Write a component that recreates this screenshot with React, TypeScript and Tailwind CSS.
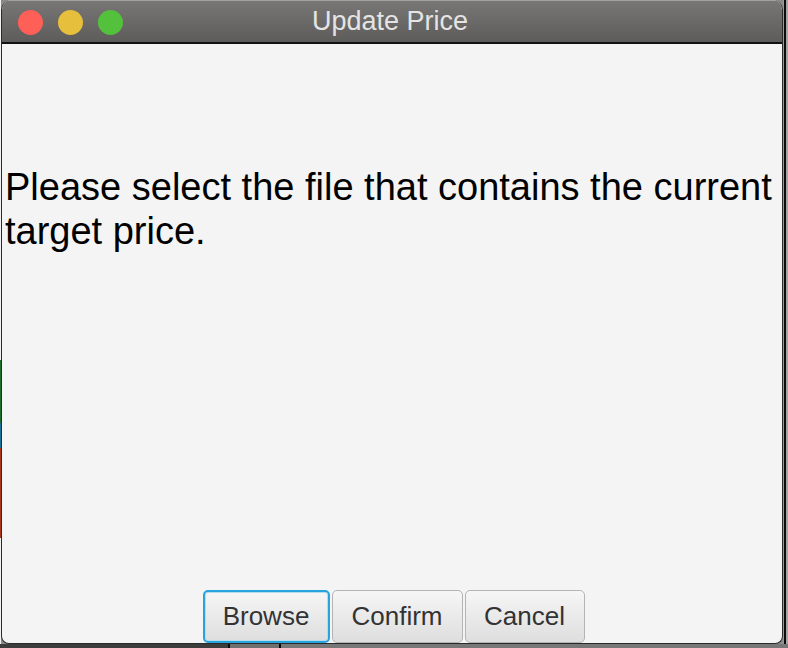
import React from "react";

const font = { fontFamily: '"Liberation Sans", Arial, sans-serif' };

/* ── Buttons ── */
const buttons = [
  { label: "Browse", w: "w-[127px]", focused: true },
  { label: "Confirm", w: "w-[131px]", focused: false },
  { label: "Cancel", w: "w-[120px]", focused: false },
];

export default function App() {
  return (
    <div className="w-[788px] h-[648px] bg-[#8a8a8a] flex flex-col overflow-hidden" style={font}>
      <div className="flex h-[644px]">
        {/* backdrop sliver on the left */}
        <div className="w-[1px] flex flex-col bg-[#f2f2f2]">
          <div className="h-[360px]" />
          <div className="h-[63px] bg-[#1f6b2c]" />
          <div className="h-[25px] bg-[#1c6f95]" />
          <div className="h-[90px] bg-[#a8391f]" />
        </div>

        {/* ── Window ── */}
        <div className="w-[782px] flex flex-col bg-[#f4f4f4] border-l border-r border-b border-[#2a2a2a] rounded-t-[10px] rounded-b-[8px] overflow-hidden">
          {/* Title bar */}
          <div className="relative h-[44px] shrink-0 flex items-center justify-center bg-gradient-to-b from-[#797775] to-[#5d5c5a] border-t border-[#a3a1a0] border-b-2 border-b-[#111]">
            <div className="absolute left-[16px] top-[9px] flex gap-[15px]">
              <span className="w-[25px] h-[25px] rounded-full bg-[#fe5f57]" />
              <span className="w-[25px] h-[25px] rounded-full bg-[#e6bf3d]" />
              <span className="w-[25px] h-[25px] rounded-full bg-[#53c13c]" />
            </div>
            <span className="text-[27px] text-[#e4e4e4] leading-none pr-[4px]">Update Price</span>
          </div>

          {/* Body */}
          <div className="flex-1 flex flex-col">
            <p className="pt-[121px] pl-[3px] pr-[4px] text-[38px] leading-[44px] text-black">
              Please select the file that contains the current target price.
            </p>
            <div className="mt-auto flex justify-center gap-[2px] pl-[3px]">
              {buttons.map((b) => (
                <button
                  key={b.label}
                  className={`${b.w} h-[53px] rounded-[5px] text-[26px] text-[#333] bg-gradient-to-b from-[#f6f6f6] to-[#dedede] ${
                    b.focused
                      ? "border-2 border-[#27a3dd] shadow-[inset_0_0_0_1px_#b9dcec]"
                      : "border border-[#b4b4b4]"
                  }`}
                >
                  {b.label}
                </button>
              ))}
            </div>
          </div>
        </div>

        {/* backdrop on the right */}
        <div className="w-[1px] bg-[#9a9a9a]" />
        <div className="w-[2px] bg-[#0c0c0c]" />
        <div className="flex-1 bg-[#a5a5a5]" />
      </div>

      {/* backdrop strip below */}
      <div className="flex-1 flex bg-[#7e7e7e]">
        <div className="w-[228px] bg-[#3c3c3c]" />
        <div className="w-[2px] bg-[#0a0a0a]" />
        <div className="w-[49px] bg-[#6f6f6f]" />
        <div className="w-[2px] bg-[#0a0a0a]" />
        <div className="flex-1 bg-[#777]" />
      </div>
    </div>
  );
}
